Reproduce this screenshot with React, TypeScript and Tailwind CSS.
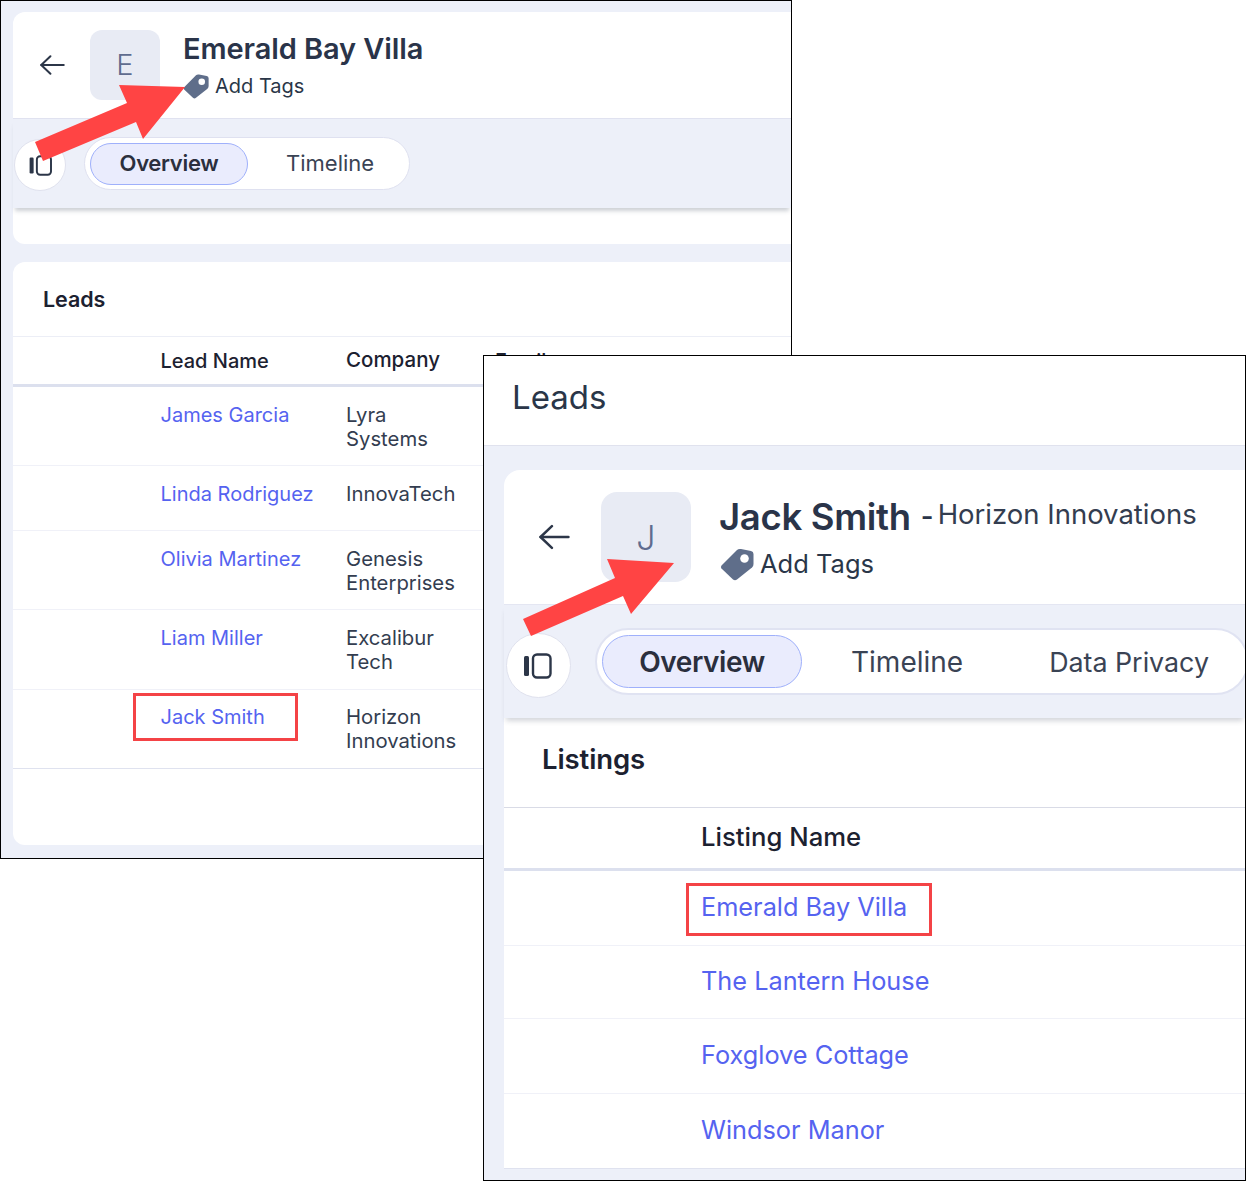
const FONT = "font-['Inter','Noto_Sans',sans-serif]";

function Tag({ className }: { className: string }) {
  return (
    <svg viewBox="0 0 34 34" className={className}>
      <path
        d="M1.5 18.5 L17 3 Q18.5 1.5 21 2 L31 4 Q33.5 4.5 33.5 7 L33.5 17 Q33.5 19 32 20.5 L17 32.5 Q15 34 13 32.5 L1.5 21.5 Q0.2 20 1.5 18.5 Z"
        fill="#5f6e8a"
      />
      <circle cx="24.5" cy="11.5" r="4.3" fill="#fff" />
    </svg>
  );
}

function Back({ className }: { className: string }) {
  return (
    <svg viewBox="0 0 30 24" fill="none" stroke="#2c3648" strokeWidth="2.4" strokeLinecap="round" strokeLinejoin="round" className={className}>
      <path d="M1.5 12 H28.5" />
      <path d="M12.5 1.5 L1.5 12 L12.5 22.5" />
    </svg>
  );
}

function PanelIcon({ className }: { className: string }) {
  return (
    <svg viewBox="0 0 28 26" fill="none" className={className}>
      <rect x="0.5" y="3" width="5" height="20" rx="1.5" fill="#2c3648" />
      <rect x="9.5" y="1.5" width="17.5" height="23" rx="4" stroke="#2c3648" strokeWidth="2.4" />
    </svg>
  );
}

const leads = [
  { name: "James Garcia", company: ["Lyra", "Systems"], h: "h-[79px]" },
  { name: "Linda Rodriguez", company: ["InnovaTech"], h: "h-[65px]" },
  { name: "Olivia Martinez", company: ["Genesis", "Enterprises"], h: "h-[79px]" },
  { name: "Liam Miller", company: ["Excalibur", "Tech"], h: "h-[80px]" },
];

const listings = [
  { name: "Emerald Bay Villa", h: "h-[75px]" },
  { name: "The Lantern House", h: "h-[73px]" },
  { name: "Foxglove Cottage", h: "h-[75px]" },
];

export default function App() {
  return (
    <div className={`relative w-[1246px] h-[1181px] bg-white overflow-hidden ${FONT}`}>
      {/* First screenshot window */}
      <div className="absolute left-0 top-0 w-[792px] h-[859px] border border-black bg-[#edf0f9] pl-3 pt-[11px] overflow-hidden">
        <div className="h-[107px] bg-white rounded-tl-xl border-b border-[#e0e2f0] flex items-center">
          <Back className="ml-[27px] w-[25px] h-[20px]" />
          <div className="ml-[25px] w-[70px] h-[70px] rounded-xl bg-[#e8ebf4] flex items-center justify-center text-[29px] font-light text-[#5f6c8f]">
            E
          </div>
          <div className="ml-[23px] flex flex-col">
            <div className="text-[29px] leading-[36px] font-semibold text-[#2a3449] tracking-[-0.1px]">Emerald Bay Villa</div>
            <div className="flex items-center mt-[6px]">
              <Tag className="w-[26px] h-[26px]" />
              <span className="ml-[6px] text-[20px] leading-[26px] text-[#2a3648]">Add Tags</span>
            </div>
          </div>
        </div>
        <div className="relative z-10 h-[89px] flex items-center shadow-[0_5px_4px_-2px_rgba(60,70,90,0.25)]">
          <div className="shrink-0 ml-px mt-[3px] w-[52px] h-[52px] rounded-full bg-white border border-[#e0e2ee] flex items-center justify-center">
            <PanelIcon className="w-[23px] h-[21px]" />
          </div>
          <div className="ml-[18px] w-[326px] h-[53px] rounded-full bg-white border border-[#dfe1f0] flex items-center pl-[5px]">
            <div className="w-[158px] h-[42px] rounded-full bg-[#eaecfd] border border-[#9fb0fb] flex items-center justify-center text-[22px] font-semibold text-[#2b2f3d] tracking-[-0.3px]">
              Overview
            </div>
            <div className="ml-[38px] text-[22px] text-[#3a4354]">Timeline</div>
          </div>
        </div>
        <div className="h-[36px] bg-white rounded-bl-xl" />
        <div className="mt-[18px] h-[583px] bg-white rounded-tl-xl rounded-bl-xl">
          <div className="h-[75px] border-b border-[#eceef6] flex items-center pl-[30px] text-[21.5px] font-semibold text-[#1c2130] tracking-[-0.1px]">
            Leads
          </div>
          <div className="h-[50px] border-b-[3px] border-[#dce0ee] flex items-center pl-[147.5px] text-[20px] font-medium text-[#1c2130]">
            <div className="w-[185.5px]">Lead Name</div>
            <div className="w-[149px] text-[20.5px]">Company</div>
            <div>Email</div>
          </div>
          {leads.map((l) => (
            <div key={l.name} className={`${l.h} border-b border-[#f0f1f8] flex items-start pt-4 pl-[147.5px] text-[20px] leading-6`}>
              <div className="w-[185.5px] text-[#5563f0]">{l.name}</div>
              <div className="text-[#333d50] text-[20.3px]">
                {l.company.map((c) => (
                  <div key={c}>{c}</div>
                ))}
              </div>
            </div>
          ))}
          <div className="h-[79px] border-b border-[#dfe2ef] flex items-start pt-[15px] pl-[147.5px] text-[20px] leading-6">
            <div className="w-[185.5px] text-[#5563f0]">Jack Smith</div>
            <div className="text-[#333d50] text-[20.3px]">
              <div>Horizon</div>
              <div>Innovations</div>
            </div>
          </div>
        </div>
      </div>

      {/* Annotations on the first window */}
      <svg className="absolute left-0 top-0 w-[300px] h-[200px] z-10" viewBox="0 0 300 200">
        <polygon points="35,142 127,103 119,85 185,87 143,139 136,122 43,161" fill="#ff4444" />
      </svg>
      <div className="absolute z-10 left-[133px] top-[693px] w-[165px] h-[48px] border-[3px] border-[#f44346]" />

      {/* Second screenshot window */}
      <div className="absolute z-20 left-[483px] top-[355px] w-[763px] h-[826px] border border-black bg-[#edf0f9] overflow-hidden">
        <div className="h-[90px] bg-white border-b border-[#e0e2ee] flex items-center pl-[28px] pb-[5px] text-[33px] text-[#2a3648]">
          Leads
        </div>
        <div className="pl-5 pt-6">
          <div className="h-[135px] bg-white rounded-tl-2xl border-b border-[#e4e6f2] flex items-center">
            <Back className="ml-[35px] w-[31px] h-[26px]" />
            <div className="ml-[31px] w-[90px] h-[90px] rounded-2xl bg-[#e8ebf4] flex items-center justify-center text-[34px] font-light text-[#5f6c8f]">
              J
            </div>
            <div className="ml-[28px] flex flex-col">
              <div className="flex items-center text-[#2a3449]">
                <span className="text-[36.5px] leading-[46px] font-semibold tracking-[-0.3px]">Jack Smith</span>
                <span className="ml-[10px] text-[27.5px] font-semibold">-</span>
                <span className="ml-[4px] -mt-[4px] text-[27.5px] text-[#333d50]">Horizon Innovations</span>
              </div>
              <div className="flex items-center mt-[7px]">
                <Tag className="ml-px w-[34px] h-[34px]" />
                <span className="ml-[6px] text-[25.5px] leading-[34px] text-[#2a3648]">Add Tags</span>
              </div>
            </div>
          </div>
          <div className="relative z-10 h-[113px] flex items-center shadow-[0_5px_5px_-2px_rgba(60,70,90,0.22)]">
            <div className="shrink-0 ml-[2px] mt-[8px] w-[65px] h-[65px] rounded-full bg-white border border-[#e0e2ee] flex items-center justify-center pr-[3px]">
              <PanelIcon className="w-[29px] h-[26px]" />
            </div>
            <div className="ml-[24px] shrink-0 w-[654px] h-[67px] rounded-full bg-white border-2 border-[#e0e3f2] flex items-center pl-[5px]">
              <div className="w-[200px] h-[53px] rounded-full bg-[#eaecfd] border border-[#9fb0fb] flex items-center justify-center text-[28px] font-semibold text-[#2b2f3d] tracking-[-0.4px]">
                Overview
              </div>
              <div className="ml-[49px] text-[28px] text-[#3a4354]">Timeline</div>
              <div className="ml-[86px] pt-[2px] text-[26.8px] text-[#3a4354]">Data Privacy</div>
            </div>
          </div>
          <div className="bg-white border-b border-[#dfe2ef]">
            <div className="h-[90px] border-b border-[#d9dbe6] flex items-center pl-[38px] pb-[6px] text-[27.5px] font-semibold text-[#1c2130] tracking-[-0.1px]">
              Listings
            </div>
            <div className="h-[63px] border-b-[3px] border-[#dce0ee] flex items-center pl-[197px] pb-px text-[25.7px] font-medium text-[#1c2130]">
              Listing Name
            </div>
            {listings.map((l) => (
              <div key={l.name} className={`${l.h} border-b border-[#f0f1f8] flex items-center pl-[197px] pb-[3px] text-[25.3px] text-[#5563f0]`}>
                {l.name}
              </div>
            ))}
            <div className="h-[74px] flex items-center pl-[197px] pb-[3px] text-[25.3px] text-[#5563f0]">Windsor Manor</div>
          </div>
        </div>
      </div>

      {/* Annotations on the second window */}
      <svg className="absolute z-30 left-[500px] top-[540px] w-[200px] h-[110px]" viewBox="500 540 200 110">
        <polygon points="523,619 615,578 607,559 674,563 631,614 623,596 531,636" fill="#ff4444" />
      </svg>
      <div className="absolute z-30 left-[686px] top-[883px] w-[246px] h-[53px] border-[3px] border-[#f44346]" />
    </div>
  );
}
